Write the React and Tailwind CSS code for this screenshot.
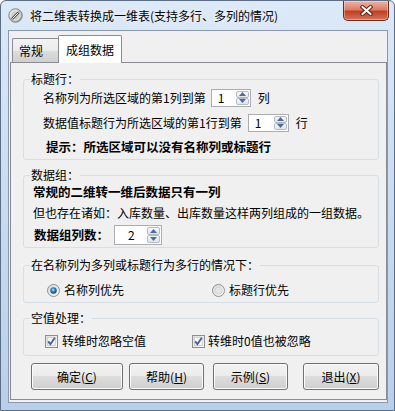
import React from "react";

// small drawings: window icon, close glyph, spin arrows, radio and check marks
const AppIcon = () => (
  <svg width="15" height="15" viewBox="0 0 15 15">
    <defs>
      <linearGradient id="ig" x1="0" y1="0" x2="1" y2="1">
        <stop offset="0" stopColor="#eeeeee" />
        <stop offset="1" stopColor="#8a8a8a" />
      </linearGradient>
    </defs>
    <circle cx="7.5" cy="7.5" r="6.8" fill="url(#ig)" stroke="#7a7a7a" strokeWidth="0.8" />
    <circle cx="7.5" cy="7.5" r="4.8" fill="#cdcdcd" stroke="#f4f4f4" strokeWidth="0.8" />
    <path d="M4.6 10.4L10.2 4.8" stroke="#5a5a5a" strokeWidth="2.6" strokeLinecap="round" />
    <path d="M4.6 10.4L10.2 4.8" stroke="#f2f2f2" strokeWidth="1" strokeLinecap="round" />
  </svg>
);

const CloseButton = () => (
  <div className="ml-auto mr-[5px] w-[46px] h-[20px] rounded-b-[5px] border border-t-0 border-[#6b2b1e] bg-[linear-gradient(#ecb4a6_0%,#dc7e67_45%,#c3401f_55%,#d3735a_100%)] shadow-[inset_0_0_0_1px_rgba(255,255,255,0.35)] flex items-center justify-center">
    <svg width="13" height="11" viewBox="0 0 13 11">
      <path d="M2.5 2L10.5 9M10.5 2L2.5 9" stroke="#5c2419" strokeWidth="4" strokeLinecap="square" />
      <path d="M2.5 2L10.5 9M10.5 2L2.5 9" stroke="#ffffff" strokeWidth="2" strokeLinecap="square" />
    </svg>
  </div>
);

const SpinBtn = ({ up }) => (
  <div className="flex-1 flex items-center justify-center rounded-[2px] border border-[#b3bbc6] bg-linear-to-b from-[#f8f9fb] to-[#dfe5ec]">
    <svg width="7" height="4" viewBox="0 0 7 4">
      <path d={up ? "M0 4L3.5 0L7 4Z" : "M0 0L7 0L3.5 4Z"} fill="#4f6b9c" />
    </svg>
  </div>
);

const Spinner = ({ value, className, textClass }) => (
  <div className={`flex bg-white border border-[#abadb3] ${className}`}>
    <span className={`flex-1 flex items-center ${textClass}`}>{value}</span>
    <div className="flex flex-col w-[14px] py-px pr-px">
      <SpinBtn up />
      <SpinBtn />
    </div>
  </div>
);

const Radio = ({ checked }) => (
  <svg width="13" height="13" viewBox="0 0 13 13">
    <defs>
      <linearGradient id="rbg" x1="0" y1="0" x2="1" y2="1">
        <stop offset="0" stopColor="#d8d8d8" />
        <stop offset="1" stopColor="#fbfbfb" />
      </linearGradient>
      <radialGradient id="rdot" cx="45%" cy="40%" r="60%">
        <stop offset="0" stopColor="#c6ecff" />
        <stop offset="0.45" stopColor="#2b8fd8" />
        <stop offset="1" stopColor="#0b3b6c" />
      </radialGradient>
    </defs>
    <circle cx="6.5" cy="6.5" r="6" fill="url(#rbg)" stroke="#8e8f8f" />
    {checked ? (
      <circle cx="6.5" cy="6.5" r="3.2" fill="url(#rdot)" />
    ) : (
      <circle cx="6.5" cy="6.5" r="3.6" fill="#e4e4e4" stroke="#cfcfcf" strokeWidth="0.8" />
    )}
  </svg>
);

const Check = () => (
  <svg width="13" height="13" viewBox="0 0 13 13">
    <defs>
      <linearGradient id="cbg" x1="0" y1="0" x2="1" y2="1">
        <stop offset="0" stopColor="#dcdcdc" />
        <stop offset="1" stopColor="#fbfbfb" />
      </linearGradient>
    </defs>
    <rect x="0.5" y="0.5" width="12" height="12" fill="url(#cbg)" stroke="#8e8f8f" />
    <rect x="2.5" y="2.5" width="8" height="8" fill="#f6f6f6" stroke="#d2d2d2" />
    <path d="M3.2 6.4L5.4 9.2L9.8 2.8" fill="none" stroke="#4a5f98" strokeWidth="1.9" />
  </svg>
);

const Btn = ({ label, k, className }) => (
  <div className={`h-[27px] flex items-center justify-center rounded-[3px] border border-[#707070] bg-[linear-gradient(#f2f2f2_0%,#ebebeb_50%,#dddddd_50%,#cfcfcf_100%)] shadow-[inset_0_0_0_1px_#fbfbfb] ${className}`}>
    <span>
      {label}(<span className="underline">{k}</span>)
    </span>
  </div>
);

export default function App() {
  return (
    <div className="w-[395px] h-[411px] flex flex-col overflow-hidden border border-[#5b6e86] rounded-t-[6px] bg-linear-to-b from-[#dce9f8] via-[#c8dbf1] to-[#b9cfe9] font-['Noto_Sans_CJK_SC',sans-serif] text-[12px] leading-none text-black">
      {/* title bar */}
      <div className="h-[29px] shrink-0 flex items-start">
        <div className="h-[29px] flex items-center pl-[7px]">
          <AppIcon />
          <span className="ml-[7px] [text-shadow:0_0_6px_#ffffff]">将二维表转换成一维表(支持多行、多列的情况)</span>
        </div>
        <CloseButton />
      </div>

      {/* client area */}
      <div className="flex-1 flex flex-col ml-[7px] mr-[6px] mb-[7px] pb-[2px] border border-[#8a9aae] bg-[#f0f0f0]">
        <div className="h-[31px] shrink-0 flex items-end pl-[3px]">
          <div className="w-[46px] h-[24px] flex items-center pl-[6px] border border-r-0 border-b-0 border-[#898c95] rounded-tl-[2px] bg-[linear-gradient(#f2f2f2_0%,#ebebeb_50%,#dddddd_50%,#cfcfcf_100%)]">
            常规
          </div>
          <div className="relative z-10 -mb-px w-[64px] h-[28px] flex items-center justify-center border border-b-0 border-[#898c95] rounded-t-[2px] bg-white">
            成组数据
          </div>
        </div>

        <div className="flex-1 flex flex-col ml-[1px] pt-[9px] pl-[12px] pr-[7px] border border-[#898c95] bg-[#f0f0f0]">
          {/* 标题行 */}
          <fieldset className="border border-[#d5dfe5] rounded-[3px] pb-[2px]">
            <legend className="ml-[6px] px-[1px] leading-[14px]">标题行：</legend>
            <div className="flex items-center h-[19px] mt-[2px] pl-[19px]">
              <span>名称列为所选区域的第1列到第</span>
              <Spinner value="1" className="ml-[5px] w-[40px] h-[18px]" textClass="pl-[6px]" />
              <span className="ml-[7px]">列</span>
            </div>
            <div className="flex items-center h-[19px] mt-[6px] pl-[19px]">
              <span>数据值标题行为所选区域的第1行到第</span>
              <Spinner value="1" className="ml-[6px] w-[41px] h-[18px]" textClass="pl-[6px]" />
              <span className="ml-[7px]">行</span>
            </div>
            <div className="flex items-center h-[19px] mt-[6px] pl-[22px] font-bold text-[12.5px]">
              提示：所选区域可以没有名称列或标题行
            </div>
          </fieldset>

          {/* 数据组 */}
          <fieldset className="mt-[8px] border border-[#d5dfe5] rounded-[3px] pb-[2px]">
            <legend className="ml-[6px] px-[1px] leading-[14px]">数据组：</legend>
            <div className="flex items-center h-[14px] mt-[3px] pl-[9px] font-bold text-[12.5px]">常规的二维转一维后数据只有一列</div>
            <div className="flex items-center h-[14px] mt-[7px] pl-[9px]">
              但也存在诸如：入库数量、出库数量这样两列组成的一组数据。
            </div>
            <div className="flex items-center h-[20px] mt-[5px] pl-[10px]">
              <span className="font-bold text-[12.5px]">数据组列数：</span>
              <Spinner value="2" className="ml-[5px] w-[48px] h-[20px]" textClass="pl-[13px]" />
            </div>
          </fieldset>

          {/* 优先 */}
          <fieldset className="mt-[10px] border border-[#d5dfe5] rounded-[3px] pb-[3px]">
            <legend className="ml-[6px] px-[1px] leading-[14px]">在名称列为多列或标题行为多行的情况下：</legend>
            <div className="flex items-center h-[18px] mt-[9px] pl-[23px]">
              <div className="w-[165px] flex items-center">
                <Radio checked />
                <span className="ml-[4px]">名称列优先</span>
              </div>
              <div className="flex items-center">
                <Radio />
                <span className="ml-[4px]">标题行优先</span>
              </div>
            </div>
          </fieldset>

          {/* 空值处理 */}
          <fieldset className="mt-[8px] border border-[#d5dfe5] rounded-[3px] pb-[6px]">
            <legend className="ml-[6px] px-[1px] leading-[14px]">空值处理：</legend>
            <div className="flex items-center h-[16px] mt-[8px] pl-[21px]">
              <div className="w-[147px] flex items-center">
                <Check />
                <span className="ml-[4px]">转维时忽略空值</span>
              </div>
              <div className="flex items-center">
                <Check />
                <span className="ml-[3px]">转维时0值也被忽略</span>
              </div>
            </div>
          </fieldset>

          <div className="flex mt-[7px]">
            <Btn label="确定" k="C" className="ml-[8px] w-[92px]" />
            <Btn label="帮助" k="H" className="ml-[6px] w-[75px]" />
            <Btn label="示例" k="S" className="ml-[9px] w-[75px]" />
            <Btn label="退出" k="X" className="ml-[15px] w-[76px]" />
          </div>
        </div>
      </div>
    </div>
  );
}
